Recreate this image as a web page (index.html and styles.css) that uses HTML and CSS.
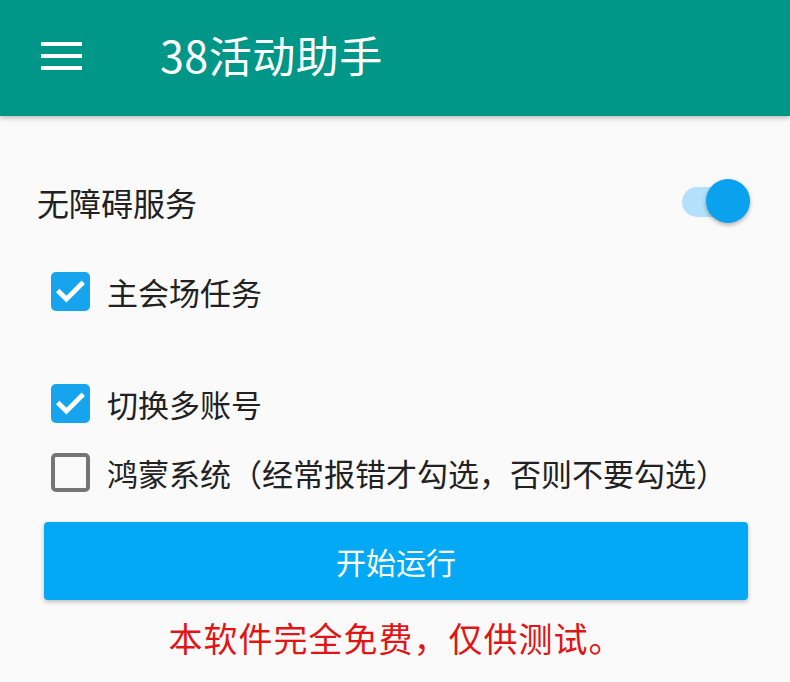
FILE: index.html
```html
<!DOCTYPE html>
<html lang="zh-CN">
<head>
    <meta charset="UTF-8">
    <meta name="viewport" content="width=device-width, initial-scale=1.0">
    <title>38活动助手</title>
    <link rel="stylesheet" href="styles.css">
</head>
<body>
    <header class="app-bar">
        <div class="menu-icon">
            <span></span><span></span><span></span>
        </div>
        <h1 class="title">38活动助手</h1>
    </header>

    <main class="content">
        <div class="row switch-row">
            <span class="label">无障碍服务</span>
            <div class="switch">
                <div class="track"></div>
                <div class="thumb"></div>
            </div>
        </div>

        <label class="row check-row first">
            <span class="box checked">
                <svg viewBox="0 0 24 24" width="39" height="39"><path d="M5.2 12.4l4.3 4.3 9.3-9.3" fill="none" stroke="#fff" stroke-width="3" stroke-linecap="square"/></svg>
            </span>
            <span class="label">主会场任务</span>
        </label>

        <label class="row check-row second">
            <span class="box checked">
                <svg viewBox="0 0 24 24" width="39" height="39"><path d="M5.2 12.4l4.3 4.3 9.3-9.3" fill="none" stroke="#fff" stroke-width="3" stroke-linecap="square"/></svg>
            </span>
            <span class="label">切换多账号</span>
        </label>

        <label class="row check-row third">
            <span class="box"></span>
            <span class="label">鸿蒙系统（经常报错才勾选，否则不要勾选）</span>
        </label>

        <button class="start-btn">开始运行</button>

        <p class="notice">本软件完全免费，仅供测试。</p>
    </main>
</body>
</html>
```

FILE: styles.css
```css
body {
    margin: 0;
    background: #fafafa;
    font-family: "Noto Sans CJK SC", "Noto Sans", sans-serif;
    color: #212121;
    width: 790px;
    height: 682px;
    overflow: hidden;
}
.app-bar {
    height: 116px;
    background: #009688;
    display: flex;
    align-items: center;
    padding-left: 41px;
    box-shadow: 0 2px 5px rgba(0, 0, 0, 0.25);
    position: relative;
}
.menu-icon {
    width: 41px;
    display: flex;
    flex-direction: column;
    gap: 8px;
    margin-top: -4px;
}
.menu-icon span {
    display: block;
    height: 4px;
    background: #fff;
}
.title {
    margin: -8px 0 0 78px;
    color: #fff;
    font-size: 43px;
    font-weight: 400;
    line-height: 1;
    letter-spacing: 0.5px;
}
.content {
    padding: 59px 40px 0 37px;
}
.row {
    display: flex;
    align-items: center;
    height: 60px;
}
.label {
    font-size: 31px;
    line-height: 1;
}
.switch-row {
    justify-content: space-between;
    margin-top: -3px;
}
.switch-row .label {
    font-size: 32px;
}
.switch {
    position: relative;
    width: 70px;
    height: 46px;
}
.track {
    position: absolute;
    left: 2px;
    top: 8px;
    width: 64px;
    height: 30px;
    border-radius: 15px;
    background: #b3e0fa;
}
.thumb {
    position: absolute;
    right: 0;
    top: 0;
    width: 44px;
    height: 44px;
    border-radius: 50%;
    background: #0aa2ee;
    box-shadow: 0 2px 4px rgba(0, 0, 0, 0.3);
}
.check-row {
    height: 56px;
    padding-left: 14px;
    gap: 17px;
}
.check-row.first { margin-top: 31px; }
.check-row.second { margin-top: 56px; }
.check-row.third { margin-top: 13px; }
.box {
    width: 39px;
    height: 39px;
    box-sizing: border-box;
    border-radius: 5px;
    border: 4px solid #757575;
    flex-shrink: 0;
}
.box.checked {
    border: none;
    background: #16a4ef;
}
.box svg {
    display: block;
}
.start-btn {
    display: block;
    width: 704px;
    height: 78px;
    margin: 22px 0 0 7px;
    border: none;
    border-radius: 4px;
    background: #03a9f4;
    color: #fff;
    font-family: inherit;
    font-size: 30px;
    box-shadow: 0 2px 4px rgba(0, 0, 0, 0.25);
}
.notice {
    margin: 18px 0 0 7px;
    text-align: center;
    width: 704px;
    color: #e01515;
    font-size: 34px;
    line-height: 40px;
    letter-spacing: 1px;
}
```
